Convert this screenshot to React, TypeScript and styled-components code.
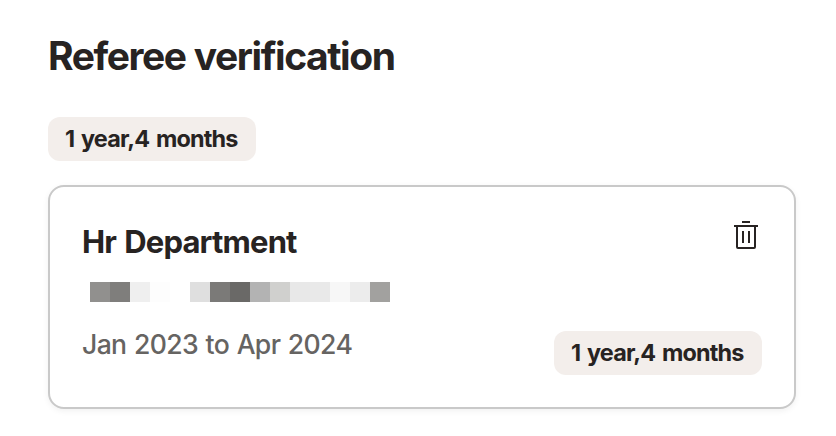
import React from "react";
import styled, { createGlobalStyle } from "styled-components";

const GlobalStyle = createGlobalStyle`
  *, *::before, *::after { box-sizing: border-box; }
  body {
    margin: 0;
    background: #fff;
    color: #272322;
    font-family: Inter, "Liberation Sans", sans-serif;
    -webkit-font-smoothing: antialiased;
  }
`;

const Section = styled.section`
  display: flex;
  flex-direction: column;
  align-items: flex-start;
  width: 836px;
  height: 436px;
  padding: 32px 40px 27px 48px;
`;

const Title = styled.h1`
  margin: 0 0 37px;
  font-size: 39px;
  line-height: 48px;
  font-weight: 700;
  letter-spacing: -1.45px;
  word-spacing: 0.5px;
  white-space: nowrap;
`;

const Tag = styled.span`
  display: flex;
  align-items: center;
  flex: none;
  width: 208px;
  height: 44px;
  padding-left: 17px;
  border-radius: 12px;
  background: #f3eeeb;
  font-size: 23.4px;
  line-height: 44px;
  font-weight: 700;
  letter-spacing: -0.82px;
  word-spacing: 2px;
  white-space: nowrap;
`;

const Card = styled.article`
  display: flex;
  flex-direction: column;
  width: 748px;
  height: 224px;
  margin-top: 24px;
  padding: 32px;
  border: 2px solid #c9c9c9;
  border-radius: 16px;
  background: #fff;
  box-shadow: 0 2px 6px rgba(0, 0, 0, 0.06);
`;

const CardHeader = styled.header`
  display: flex;
  justify-content: space-between;
  height: 63px;
`;

const CardTitle = styled.h2`
  margin: 3px 0 0;
  font-size: 31px;
  line-height: 40px;
  font-weight: 700;
  letter-spacing: -0.82px;
  word-spacing: 1.5px;
  white-space: nowrap;
`;

const IconButton = styled.button`
  width: 32px;
  height: 32px;
  padding: 0;
  border: 0;
  background: none;
  color: #272322;

  svg { display: block; }
`;

const Redacted = styled.div`
  display: flex;
  height: 20px;
  margin-left: 8px;
`;

const Block = styled.span<{ $tone: string }>`
  width: 20px;
  height: 20px;
  background: ${({ $tone }) => $tone};
`;

const CardFooter = styled.footer`
  display: flex;
  align-items: flex-end;
  justify-content: space-between;
  margin-top: auto;
`;

const Period = styled.p`
  margin: 0 0 13px;
  color: #666462;
  font-size: 26.6px;
  line-height: 36px;
  font-weight: 500;
  letter-spacing: -0.65px;
  word-spacing: 1.1px;
  white-space: nowrap;
`;

const tones = [
  "#91908e", "#7f7e7c", "#efefef", "#fdfdfd", "#ffffff",
  "#dfdfdf", "#7b7a78", "#6a6967", "#b3b3b3", "#d0d0ce",
  "#e8e8e8", "#e9e9e9", "#f7f7f7", "#ececec", "#a2a19f",
];

const duration = "1 year,4 months";

function TrashIcon() {
  return (
    <svg width="32" height="32" viewBox="0 0 32 32" fill="none" stroke="currentColor" strokeWidth="2">
      <path d="M12 3h8M4 7h24M7 8v20q0 1 1 1h16q1 0 1-1V8M13 12v12M19 12v12" />
    </svg>
  );
}

export default function App() {
  return (
    <>
      <GlobalStyle />
      <Section>
        <Title>Referee verification</Title>
        <Tag>{duration}</Tag>
        <Card>
          <CardHeader>
            <CardTitle>Hr Department</CardTitle>
            <IconButton aria-label="Delete referee">
              <TrashIcon />
            </IconButton>
          </CardHeader>
          <Redacted>
            {tones.map((tone, i) => (
              <Block key={i} $tone={tone} />
            ))}
          </Redacted>
          <CardFooter>
            <Period>Jan 2023 to Apr 2024</Period>
            <Tag>{duration}</Tag>
          </CardFooter>
        </Card>
      </Section>
    </>
  );
}
